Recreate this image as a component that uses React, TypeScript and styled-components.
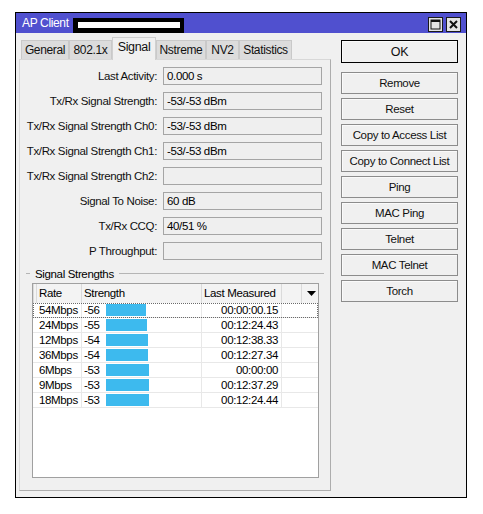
import React from 'react';
import styled, { createGlobalStyle, css } from 'styled-components';

const FONT = '"Liberation Sans", Arial, sans-serif';

const GlobalStyle = createGlobalStyle`
  body {
    margin: 0;
    background: #ffffff;
    font-family: ${FONT};
    font-size: 11.5px;
    letter-spacing: -0.35px;
    color: #000;
  }
  * {
    box-sizing: border-box;
  }
`;

interface Rate {
  rate: string;
  strength: number;
  measured: string;
}

const rates: Rate[] = [
  { rate: '54Mbps', strength: -56, measured: '00:00:00.15' },
  { rate: '24Mbps', strength: -55, measured: '00:12:24.43' },
  { rate: '12Mbps', strength: -54, measured: '00:12:38.33' },
  { rate: '36Mbps', strength: -54, measured: '00:12:27.34' },
  { rate: '6Mbps', strength: -53, measured: '00:00:00' },
  { rate: '9Mbps', strength: -53, measured: '00:12:37.29' },
  { rate: '18Mbps', strength: -53, measured: '00:12:24.44' },
];

const fields: [string, string][] = [
  ['Last Activity:', '0.000 s'],
  ['Tx/Rx Signal Strength:', '-53/-53 dBm'],
  ['Tx/Rx Signal Strength Ch0:', '-53/-53 dBm'],
  ['Tx/Rx Signal Strength Ch1:', '-53/-53 dBm'],
  ['Tx/Rx Signal Strength Ch2:', ''],
  ['Signal To Noise:', '60 dB'],
  ['Tx/Rx CCQ:', '40/51 %'],
  ['P Throughput:', ''],
];

const tabs = [
  { label: 'General', width: 48 },
  { label: '802.1x', width: 43 },
  { label: 'Signal', width: 44 },
  { label: 'Nstreme', width: 50 },
  { label: 'NV2', width: 33 },
  { label: 'Statistics', width: 53 },
];

const actions = [
  'Remove',
  'Reset',
  'Copy to Access List',
  'Copy to Connect List',
  'Ping',
  'MAC Ping',
  'Telnet',
  'MAC Telnet',
  'Torch',
];

const Window = styled.div`
  margin: 12px 0 0 15px;
  width: 452px;
  height: 486px;
  border: 1px solid #000;
  background: #f0f0f0;
  display: flex;
  flex-direction: column;
`;

const TitleBar = styled.div`
  height: 20px;
  background: #5050cf;
  color: #fff;
  display: flex;
  align-items: center;
  padding: 0 5px 0 6px;
  font-size: 12px;
`;

const Title = styled.span`
  line-height: 20px;
`;

const Redacted = styled.div`
  align-self: flex-end;
  width: 111px;
  height: 15px;
  margin-left: 4px;
  background: #000;
  padding: 4px 4px 0 5px;
`;

const RedactedBar = styled.div`
  height: 6px;
  background: #fff;
`;

const WindowControls = styled.div`
  margin-left: auto;
  display: flex;
  gap: 3px;
  align-self: flex-end;
  margin-bottom: 1px;
`;

const ControlButton = styled.div`
  width: 15px;
  height: 15px;
  background: #e4e4e4;
  border: 1px solid #1a1a1a;
  display: flex;
  align-items: center;
  justify-content: center;
`;

const Body = styled.div`
  flex: 1;
  display: flex;
  padding: 4px 7px 6px 3px;
`;

const LeftColumn = styled.div`
  width: 312px;
  display: flex;
  flex-direction: column;
`;

const TabRow = styled.div`
  height: 22px;
  display: flex;
  align-items: flex-end;
  padding-left: 2px;
`;

const Tab = styled.div<{ $active?: boolean }>`
  height: 19px;
  background: #dcdcdc;
  border: 1px solid #c9c9c9;
  border-bottom: none;
  display: flex;
  align-items: center;
  justify-content: center;
  font-size: 12px;
  color: #111;
  ${(p) =>
    p.$active &&
    css`
      height: 23px;
      margin-bottom: -1px;
      background: #f0f0f0;
      border-color: #d0d0d0;
      position: relative;
      z-index: 1;
      align-items: flex-start;
      padding-top: 2px;
      font-size: 12.5px;
    `}
`;

const Panel = styled.div`
  flex: 1;
  border: 1px solid #adadad;
  border-top-color: #d8d8d8;
  border-left-color: #d8d8d8;
  display: flex;
  flex-direction: column;
`;

const FieldGrid = styled.div`
  display: grid;
  grid-template-columns: 137px 159px;
  grid-auto-rows: 18px;
  column-gap: 6px;
  row-gap: 7px;
  padding-top: 7px;
`;

const Label = styled.div`
  text-align: right;
  line-height: 18px;
  white-space: nowrap;
  color: #111;
`;

const Value = styled.div`
  border: 1px solid #a5a5a5;
  background: #efefef;
  line-height: 16px;
  padding-left: 3px;
`;

const Legend = styled.div`
  margin-top: 7px;
  height: 13px;
  display: flex;
  align-items: center;
  padding: 0 6px;
  &::before {
    content: '';
    width: 4px;
    border-top: 1px solid #b5b5b5;
  }
  &::after {
    content: '';
    flex: 1;
    border-top: 1px solid #b5b5b5;
  }
`;

const LegendText = styled.span`
  padding: 0 5px;
`;

const Table = styled.div`
  margin: 3px 0 0 12px;
  width: 287px;
  height: 195px;
  border: 1px solid #a0a0a0;
  background: #fff;
`;

const HeaderRow = styled.div`
  display: grid;
  grid-template-columns: 4px 45px 120px 80px 20px 1fr;
  height: 19px;
  background: #f3f3f3;
`;

const HeaderCell = styled.div`
  border-right: 1px solid #dadada;
  line-height: 18px;
  padding-left: 2px;
  white-space: nowrap;
  &:first-child {
    border-left: 1px solid #dadada;
  }
  &:last-child {
    border-right: none;
    display: flex;
    align-items: center;
    justify-content: center;
  }
`;

const DataRow = styled.div<{ $focused?: boolean }>`
  display: grid;
  grid-template-columns: 49px 120px 80px 1fr;
  height: 15px;
  border-bottom: 1px solid #e8e8e8;
  ${(p) =>
    p.$focused &&
    css`
      outline: 1px dotted #6a6a6a;
      outline-offset: -1px;
    `}
`;

const Cell = styled.div<{ $align?: 'left' | 'right' }>`
  border-right: 1px solid #e8e8e8;
  line-height: 14px;
  white-space: nowrap;
  padding: 0 3px 0 6px;
  text-align: ${(p) => p.$align ?? 'left'};
  &:last-child {
    border-right: none;
  }
`;

const StrengthCell = styled.div`
  border-right: 1px solid #e8e8e8;
  display: flex;
  align-items: center;
  line-height: 14px;
`;

const StrengthValue = styled.span`
  width: 24px;
  padding-left: 2px;
`;

const Bar = styled.div`
  height: 12px;
  background: #3dbaee;
`;

const RightColumn = styled.div`
  margin-left: 10px;
  width: 117px;
  padding-top: 3px;
  display: flex;
  flex-direction: column;
  gap: 4px;
`;

const Button = styled.div<{ $primary?: boolean }>`
  height: 22px;
  border: 1px solid #8c8c8c;
  box-shadow: inset 1px 1px 0 #fafafa;
  background: #f0f0f0;
  display: flex;
  align-items: center;
  justify-content: center;
  color: #111;
  white-space: nowrap;
  ${(p) =>
    p.$primary &&
    css`
      height: 23px;
      border-color: #000;
      margin-bottom: 5px;
      font-size: 12.5px;
    `}
`;

function MaximizeIcon() {
  return (
    <svg width="11" height="11" viewBox="0 0 11 11">
      <rect x="1" y="1" width="9" height="9" fill="none" stroke="#111" strokeWidth="1" />
      <rect x="1" y="1" width="9" height="2" fill="#111" />
    </svg>
  );
}

function CloseIcon() {
  return (
    <svg width="11" height="11" viewBox="0 0 11 11">
      <path d="M2 2 L9 9 M9 2 L2 9" stroke="#111" strokeWidth="2" />
    </svg>
  );
}

function SortArrow() {
  return (
    <svg width="9" height="5" viewBox="0 0 9 5">
      <path d="M0 0 H9 L4.5 5 Z" fill="#000" />
    </svg>
  );
}

export default function App() {
  return (
    <>
      <GlobalStyle />
      <Window>
        <TitleBar>
          <Title>AP Client</Title>
          <Redacted>
            <RedactedBar />
          </Redacted>
          <WindowControls>
            <ControlButton>
              <MaximizeIcon />
            </ControlButton>
            <ControlButton>
              <CloseIcon />
            </ControlButton>
          </WindowControls>
        </TitleBar>
        <Body>
          <LeftColumn>
            <TabRow>
              {tabs.map((t) => (
                <Tab key={t.label} $active={t.label === 'Signal'} style={{ width: t.width }}>
                  {t.label}
                </Tab>
              ))}
            </TabRow>
            <Panel>
              <FieldGrid>
                {fields.map(([label, value]) => (
                  <React.Fragment key={label}>
                    <Label>{label}</Label>
                    <Value>{value}</Value>
                  </React.Fragment>
                ))}
              </FieldGrid>
              <Legend>
                <LegendText>Signal Strengths</LegendText>
              </Legend>
              <Table>
                <HeaderRow>
                  <HeaderCell />
                  <HeaderCell>Rate</HeaderCell>
                  <HeaderCell>Strength</HeaderCell>
                  <HeaderCell>Last Measured</HeaderCell>
                  <HeaderCell />
                  <HeaderCell>
                    <SortArrow />
                  </HeaderCell>
                </HeaderRow>
                {rates.map((r, i) => (
                  <DataRow key={r.rate} $focused={i === 0}>
                    <Cell>{r.rate}</Cell>
                    <StrengthCell>
                      <StrengthValue>{r.strength}</StrengthValue>
                      <Bar style={{ width: 40 + (56 + r.strength) }} />
                    </StrengthCell>
                    <Cell $align="right">{r.measured}</Cell>
                    <Cell />
                  </DataRow>
                ))}
              </Table>
            </Panel>
          </LeftColumn>
          <RightColumn>
            <Button $primary>OK</Button>
            {actions.map((a) => (
              <Button key={a}>{a}</Button>
            ))}
          </RightColumn>
        </Body>
      </Window>
    </>
  );
}
